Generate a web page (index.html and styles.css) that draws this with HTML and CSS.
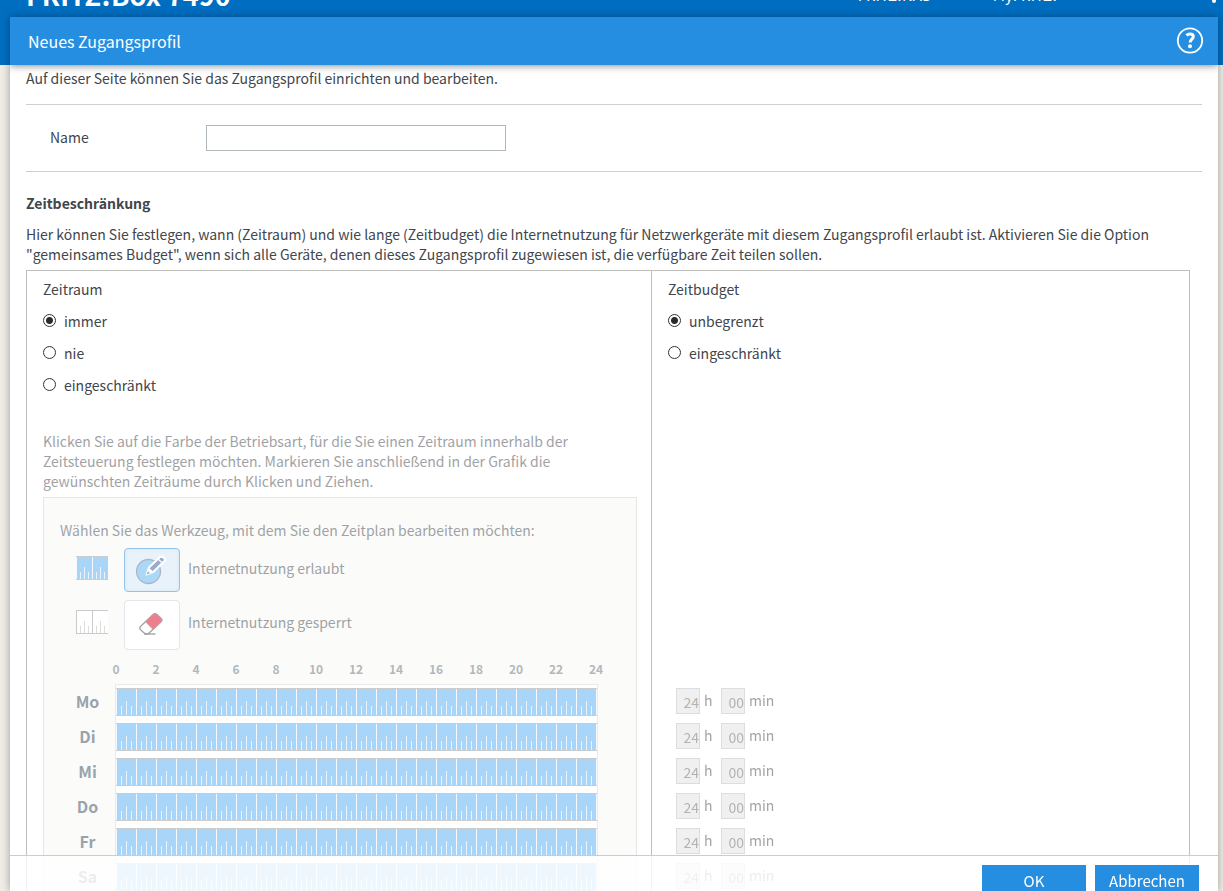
FILE: index.html
```
<!DOCTYPE html>
<html lang="de">
<head>
<meta charset="utf-8">
<title>FRITZ!Box 7490 – Neues Zugangsprofil</title>
<link rel="stylesheet" href="styles.css">
</head>
<body>
<div class="masthead">
  <span class="product">FRITZ!Box 7490</span>
  <nav class="masthead-nav"><a href="#nas">FRITZ!NAS</a><a href="#my">MyFRITZ!</a></nav>
  <span class="more" aria-hidden="true"></span>
</div>
<main class="dialog">
  <header class="dialog-head">
    <h1>Neues Zugangsprofil</h1>
    <button class="help" type="button" aria-label="Hilfe">
      <svg viewBox="0 0 28 28" width="28" height="28" fill="none"><circle cx="14" cy="13.5" r="12.2" stroke="#fff" stroke-width="1.8"/><path d="M10.4 8.4Q12 7 14 7C16.3 7 17.3 8.2 17.3 9.7C17.3 12 14.1 12.4 14.1 15.6" stroke="#fff" stroke-width="3"/><circle cx="14" cy="19.2" r="2" fill="#fff"/></svg>
    </button>
  </header>
  <form class="content" id="profile">
    <p>Auf dieser Seite können Sie das Zugangsprofil einrichten und bearbeiten.</p>
    <div class="name-row">
      <label for="name">Name</label>
      <input type="text" id="name" class="name-input">
    </div>
    <h2>Zeitbeschränkung</h2>
    <p>Hier können Sie festlegen, wann (Zeitraum) und wie lange (Zeitbudget) die Internetnutzung für Netzwerkgeräte mit diesem Zugangsprofil erlaubt ist. Aktivieren Sie die Option "gemeinsames Budget", wenn sich alle Geräte, denen dieses Zugangsprofil zugewiesen ist, die verfügbare Zeit teilen sollen.</p>
    <div class="limits">
      <section class="limit">
        <h3>Zeitraum</h3>
        <label class="choice"><input type="radio" name="time" checked>immer</label>
        <label class="choice"><input type="radio" name="time">nie</label>
        <label class="choice"><input type="radio" name="time">eingeschränkt</label>
        <div class="disabled">
          <p class="hint">Klicken Sie auf die Farbe der Betriebsart, für die Sie einen Zeitraum innerhalb der Zeitsteuerung festlegen möchten. Markieren Sie anschließend in der Grafik die gewünschten Zeiträume durch Klicken und Ziehen.</p>
          <div class="planner">
            <p>Wählen Sie das Werkzeug, mit dem Sie den Zeitplan bearbeiten möchten:</p>
            <div class="tool">
              <span class="swatch ruler"></span>
              <button type="button" class="tool-btn active" id="allow" aria-label="Internetnutzung erlaubt">
                <svg viewBox="0 0 32 32" width="32" height="32"><circle cx="12.5" cy="17.5" r="12" fill="#5bb3f2" stroke="#547096" stroke-width="1.3"/><path d="M10.5 20.5L13 13.5L24 3Q27 1.5 29.5 6L17.5 17.8Z" fill="#3f5899" stroke="#fff" stroke-width="2" stroke-linejoin="round"/><path d="M11 20L13.2 14L17.2 17.6Z" fill="#fff"/><path d="M22 5L27 9.5" stroke="#fff" stroke-width="1.3"/><path d="M10.5 20.5L12 17.2L14 19.2Z" fill="#3f5899"/></svg>
              </button>
              <label for="allow">Internetnutzung erlaubt</label>
            </div>
            <div class="tool">
              <span class="swatch ruler empty"></span>
              <button type="button" class="tool-btn block" id="block" aria-label="Internetnutzung gesperrt">
                <svg viewBox="0 0 32 32" width="32" height="32"><path d="M4.5 17.5L17 5.5Q19 3.8 21 5.5L25.2 9.5Q26.8 11.3 25 13L12.5 24.5Q10.5 26 8.5 24.2L4.8 21Q3 19.3 4.5 17.5Z" fill="#fff" stroke="#444" stroke-width="1.2"/><path d="M9.5 12.7L17 5.5Q19 3.8 21 5.5L25.2 9.5Q26.8 11.3 25 13L17 20.4Z" fill="#e0001b" stroke="#80525c" stroke-width=".8"/><path d="M8 25H19.5" stroke="#333" stroke-width="1.2"/></svg>
              </button>
              <label for="block">Internetnutzung gesperrt</label>
            </div>
            <div class="axis"><span>0</span><span>2</span><span>4</span><span>6</span><span>8</span><span>10</span><span>12</span><span>14</span><span>16</span><span>18</span><span>20</span><span>22</span><span>24</span></div>
            <div class="schedule">
              <div class="days"><span>Mo</span><span>Di</span><span>Mi</span><span>Do</span><span>Fr</span><span>Sa</span><span>So</span></div>
              <div class="bars"><div class="bar ruler"></div><div class="bar ruler"></div><div class="bar ruler"></div><div class="bar ruler"></div><div class="bar ruler"></div><div class="bar ruler"></div><div class="bar ruler"></div></div>
            </div>
          </div>
        </div>
      </section>
      <section class="limit">
        <h3>Zeitbudget</h3>
        <label class="choice"><input type="radio" name="budget" checked>unbegrenzt</label>
        <label class="choice"><input type="radio" name="budget">eingeschränkt</label>
        <div class="budgets disabled">
          <div class="budget"><input id="h1" value="24" disabled><label for="h1">h</label><input id="m1" value="00" disabled><label for="m1">min</label></div>
          <div class="budget"><input id="h2" value="24" disabled><label for="h2">h</label><input id="m2" value="00" disabled><label for="m2">min</label></div>
          <div class="budget"><input id="h3" value="24" disabled><label for="h3">h</label><input id="m3" value="00" disabled><label for="m3">min</label></div>
          <div class="budget"><input id="h4" value="24" disabled><label for="h4">h</label><input id="m4" value="00" disabled><label for="m4">min</label></div>
          <div class="budget"><input id="h5" value="24" disabled><label for="h5">h</label><input id="m5" value="00" disabled><label for="m5">min</label></div>
          <div class="budget"><input id="h6" value="24" disabled><label for="h6">h</label><input id="m6" value="00" disabled><label for="m6">min</label></div>
        </div>
      </section>
    </div>
  </form>
  <footer class="dialog-foot">
    <button type="submit" form="profile">OK</button>
    <button type="button">Abbrechen</button>
  </footer>
</main>
</body>
</html>
```

FILE: styles.css
```
* { box-sizing: border-box; }
html, body { height: 100%; }
body, button, input {
  font-family: "Noto Sans CJK SC", "Open Sans", sans-serif;
  font-size: 14px;
  line-height: 20px;
  color: #3f464c;
}
body {
  margin: 0;
  padding: 17px 5px 0 10px;
  overflow: hidden;
  background: #efede6;
}
h1, h2, h3, p { margin: 0; font-size: 14px; font-weight: 400; }
button { cursor: pointer; }

/* page header, partly scrolled out behind the dialog */
.masthead {
  position: absolute;
  inset: 0 0 auto 0;
  height: 65px;
  overflow: hidden;
  background: #006ec0;
  color: #fff;
}
.product {
  position: absolute;
  left: 26px;
  top: -25px;
  font-size: 27px;
  font-weight: 700;
  line-height: 40px;
}
.masthead-nav {
  position: absolute;
  right: 166px;
  top: -15px;
  display: flex;
  gap: 62px;
  font-size: 15px;
}
.masthead-nav a { color: #fff; text-decoration: none; }
.more {
  position: absolute;
  right: 7px;
  top: -1px;
  width: 4px;
  height: 4px;
  border-radius: 50%;
  background: #fff;
}

.dialog {
  position: relative;
  display: flex;
  flex-direction: column;
  height: 100%;
  background: #fff;
  box-shadow: 0 0 8px rgba(0, 0, 0, .35);
  overflow: hidden;
}
.dialog-head {
  position: relative;
  flex: none;
  display: flex;
  align-items: center;
  justify-content: space-between;
  height: 48px;
  padding: 0 14px 0 18px;
  background: #268ee0;
  box-shadow: 0 1px 7px rgba(0, 0, 0, .45);
}
.dialog-head h1 { font-size: 16px; color: #fff; }
.help { width: 28px; height: 28px; padding: 0; border: 0; background: none; }
.help svg { display: block; }

.content {
  flex: 1;
  min-height: 0;
  overflow: hidden;
  padding: 3px 16px 0;
}
.name-row {
  display: flex;
  align-items: center;
  height: 68px;
  margin: 16px 0 21px;
  padding-left: 24px;
  border: solid #ccd0d0;
  border-width: 1px 0;
}
.name-row label { width: 156px; padding-bottom: 2px; }
.name-input {
  width: 300px;
  height: 26px;
  border: 1px solid #b0b8bc;
  background: #fff;
}
.content h2 { font-weight: 700; margin-bottom: 11px; }

.limits {
  display: grid;
  grid-template-columns: 624fr 538fr;
  margin: 6px 12px 0 0;
  border: 1px solid #bfbfbb;
}
.limit { padding: 8px 14px 0 16px; }
.limit + .limit { border-left: 1px solid #bfbfbb; }
.limit h3 { margin-bottom: 12px; }
.choice {
  display: flex;
  align-items: center;
  gap: 8px;
  height: 20px;
  margin-bottom: 12px;
}
.choice input {
  appearance: none;
  width: 13px;
  height: 13px;
  margin: 0 0 1px;
  border: 1px solid #333;
  border-radius: 50%;
  background: #fff;
}
.choice input:checked { background: radial-gradient(circle, #2b2b2b 3px, #fff 4px); }

.disabled { opacity: .5; }
.hint { margin: 36px 0 6px; }
.planner {
  padding: 22px 16px 20px;
  border: 1px solid #c8d0d0;
  background: #f8f8f5;
}
.tool {
  display: flex;
  padding-left: 16px;
  margin: 8px 0;
}
.tool + .tool { margin-top: 0; }
.tool label { padding-top: 10px; }
.tool-btn {
  display: grid;
  place-items: center;
  width: 56px;
  height: 44px;
  margin: 0 8px 0 16px;
  padding: 0;
  border: 1px solid #c5d0d6;
  border-radius: 4px;
  background: #fff;
}
.tool-btn.active {
  border-color: #2e86d2;
  background: #d4e7f8;
  box-shadow: inset 0 0 5px #b4d2ee;
}
.tool-btn.block { height: 50px; }
.tool-btn.block + label { padding-top: 12px; }

/* hour pattern: full line each hour, short marks each quarter */
.ruler {
  --hour: #eef7fe;
  --mark: #d4eafc;
  border: solid #999;
  border-width: 1px 0;
  background-color: #55aff3;
  background-image:
    linear-gradient(90deg, var(--hour) 1px, transparent 1px),
    linear-gradient(90deg, transparent 10px, var(--mark) 10px, var(--mark) 11px, transparent 11px),
    linear-gradient(90deg, transparent 5px, var(--mark) 5px, var(--mark) 6px, transparent 6px, transparent 15px, var(--mark) 15px, var(--mark) 16px, transparent 16px);
  background-size: 20px 100%, 20px 14px, 20px 9px;
  background-position: 0 0, 0 100%, 0 100%;
  background-repeat: repeat-x;
}
.swatch {
  width: 32px;
  height: 24px;
  margin-top: 8px;
  background-size: 16px 100%, 16px 12px, 16px 7px;
  background-image:
    linear-gradient(90deg, var(--hour) 1px, transparent 1px),
    linear-gradient(90deg, transparent 8px, var(--mark) 8px, var(--mark) 9px, transparent 9px),
    linear-gradient(90deg, transparent 4px, var(--mark) 4px, var(--mark) 5px, transparent 5px, transparent 12px, var(--mark) 12px, var(--mark) 13px, transparent 13px);
}
.swatch.empty {
  --hour: #999;
  --mark: #bbb;
  margin-top: 10px;
  background-color: #fff;
}

.axis {
  display: flex;
  margin: 10px 0 6px 36px;
  font-size: 12px;
  font-weight: 700;
  line-height: 18px;
  color: #65747c;
}
.axis span { width: 40px; text-align: center; }
.schedule { display: flex; }
.days {
  width: 55px;
  font-size: 16px;
  font-weight: 700;
  color: #34495a;
}
.days span {
  display: block;
  height: 35px;
  line-height: 35px;
  text-align: center;
}
.bars {
  width: 483px;
  padding: 3px 0 0;
  border: solid #d4d8d8;
  border-width: 1px 1px 0;
  background: #fff;
}
.bar { height: 28px; margin-bottom: 7px; }

.budgets { margin-top: 325px; padding-left: 8px; }
.budget {
  display: flex;
  align-items: center;
  height: 26px;
  margin-bottom: 9px;
}
.budget input {
  width: 24px;
  height: 26px;
  padding: 1px 0 0;
  border: 1px solid #b4bcc2;
  background: #e0e0e0;
  color: #666;
  text-align: right;
}
.budget label { padding: 0 0 2px 4px; }
.budget label:nth-of-type(1) { width: 21px; }

.dialog-foot {
  position: absolute;
  inset: auto 0 0 0;
  display: flex;
  justify-content: flex-end;
  gap: 9px;
  height: 36px;
  padding: 9px 19px 0;
  overflow: hidden;
  border-top: 1px solid #ccc;
  background: rgba(255, 255, 255, .8);
}
.dialog-foot button {
  min-width: 104px;
  height: 34px;
  padding: 0 14px 2px;
  border: 0;
  background: #268ee0;
  color: #fff;
  font-size: 15px;
}
```
